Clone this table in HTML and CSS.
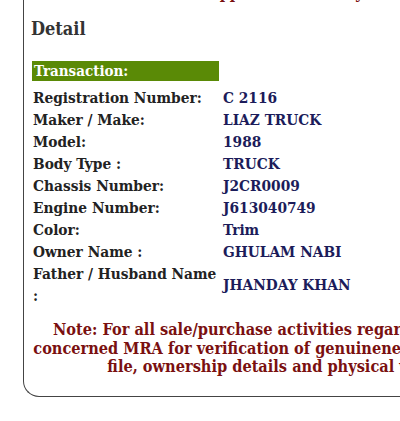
FILE: index.html
```html
<!DOCTYPE html>
<html>
<head>
<meta charset="utf-8">
<link rel="stylesheet" href="styles.css">
</head>
<body>
<div class="page">
  <div class="card">
    <p class="top-note">This information is approved online by</p>
    <h2 class="title">Detail</h2>
    <div class="bar">Transaction:</div>
    <div class="rows">
      <div class="label">Registration Number:</div><div class="value">C 2116</div>
      <div class="label">Maker / Make:</div><div class="value">LIAZ TRUCK</div>
      <div class="label">Model:</div><div class="value">1988</div>
      <div class="label">Body Type :</div><div class="value">TRUCK</div>
      <div class="label">Chassis Number:</div><div class="value">J2CR0009</div>
      <div class="label">Engine Number:</div><div class="value">J613040749</div>
      <div class="label">Color:</div><div class="value">Trim</div>
      <div class="label">Owner Name :</div><div class="value">GHULAM NABI</div>
      <div class="label">Father / Husband Name :</div><div class="value mid">JHANDAY KHAN</div>
    </div>
    <p class="note">Note: For all sale/purchase activities regarding this vehicle, visit<br>concerned MRA for verification of genuineness of documents, vehicle<br>file, ownership details and physical verification etc.</p>
  </div>
</div>
</body>
</html>
```

FILE: styles.css
```css
html, body {
  margin: 0;
  padding: 0;
  background: #fff;
  overflow: hidden;
}
body {
  font-family: "DejaVu Serif Condensed", "DejaVu Serif", "Liberation Serif", serif;
  font-stretch: semi-condensed;
  font-weight: bold;
  width: 400px;
  height: 421px;
}
.page {
  padding-left: 23px;
}
.card {
  display: flow-root;
  width: 440px;
  height: 397px;
  box-sizing: border-box;
  border-left: 1.5px solid #444;
  border-bottom: 1.5px solid #444;
  border-bottom-left-radius: 16px;
  padding-left: 7px;
}
.top-note {
  margin: -17px 0 0 0;
  padding-left: 20px;
  font-size: 16px;
  line-height: 19px;
  color: #7a1010;
  white-space: nowrap;
}
.title {
  margin: 15px 0 0 0;
  font-size: 18px;
  line-height: 24px;
  color: #333;
}
.bar {
  margin-top: 20px;
  margin-left: 1px;
  width: 187px;
  height: 20px;
  box-sizing: border-box;
  padding-left: 2px;
  background: #5a8a06;
  color: #fff;
  font-size: 15px;
  line-height: 20px;
}
.rows {
  display: grid;
  grid-template-columns: 190px auto;
  margin-top: 6px;
  padding-left: 2px;
  font-size: 15.3px;
  line-height: 22px;
}
.label {
  color: #222;
  width: 186px;
}
.value {
  color: #1c1c5a;
}
.value.mid {
  align-self: center;
}
.note {
  margin: 14px 0 0 -4px;
  width: 580px;
  text-align: center;
  font-size: 16.2px;
  line-height: 18.5px;
  color: #7a1010;
  white-space: nowrap;
}
```
